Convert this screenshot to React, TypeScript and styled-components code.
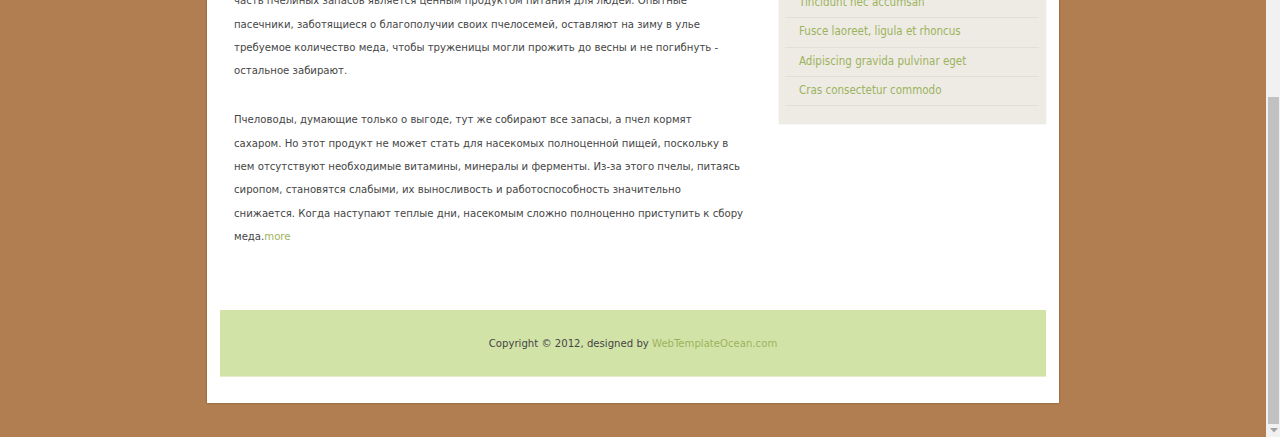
import React from "react";
import styled, { createGlobalStyle } from "styled-components";

const GlobalStyle = createGlobalStyle`
  html, body { margin: 0; padding: 0; }
  body {
    background: #b07e50;
    font-family: "DejaVu Sans Condensed", "DejaVu Sans", Tahoma, sans-serif;
    font-stretch: condensed;
    font-size: 11.25px;
    color: #454545;
  }
  a { text-decoration: none; }
`;

const Screen = styled.div`
  display: flex;
  width: 1280px;
  height: 437px;
  overflow: hidden;
`;

const Viewport = styled.div`
  flex: 1;
  display: flex;
  flex-direction: column;
  justify-content: flex-end;
  overflow: hidden;
  padding-bottom: 34px;
`;

const Wrapper = styled.div`
  width: 852px;
  margin: 0 auto;
  background: #ffffff;
  box-shadow: 0 0 2px rgba(60, 30, 0, 0.45);
  padding: 0 13px 26px;
  box-sizing: border-box;
`;

const ContentRow = styled.div`
  display: grid;
  grid-template-columns: 520px 267px;
  justify-content: space-between;
  align-items: start;
  padding-left: 14px;
`;

const Main = styled.div`
  padding: 30px 0 61.67px;
`;

const Title = styled.h2`
  margin: 0 0 15px;
  font-size: 22px;
  line-height: 30px;
  font-weight: normal;
  color: #6b8a2a;
`;

const Paragraph = styled.p<{ $last?: boolean }>`
  margin: 0 0 ${(p) => (p.$last ? 0 : 25.67)}px;
  line-height: 23.33px;
  color: #454545;
  white-space: nowrap;
`;

const GreenLink = styled.a`
  color: #9cb35c;
`;

const Sidebar = styled.aside`
  background: #eeebe5;
  box-shadow: 0 0 1px rgba(0, 0, 0, 0.18);
  padding: 10px 7px 17.67px 6px;
`;

const SideTitle = styled.h3`
  margin: 0 0 9.33px 14px;
  font-size: 15px;
  line-height: 20px;
  font-weight: normal;
  color: #6b8a2a;
`;

const LinkList = styled.ul`
  list-style: none;
  margin: 0;
  padding: 0;
`;

const LinkItem = styled.li`
  padding: 5px 0 7px 14px;
  font-size: 11.5px;
  line-height: 16.33px;
  height: 16.33px;
  border-bottom: 1px solid #e2dfd7;
`;

const SideLink = styled.a`
  color: #9cb35c;
`;

const Footer = styled.footer`
  height: 66px;
  display: flex;
  align-items: center;
  justify-content: center;
  background: #d2e3a8;
  border-bottom: 1px solid #e3edca;
  color: #454545;
`;

const ScrollTrack = styled.div`
  width: 14px;
  background: #f1f1f1;
  display: flex;
  flex-direction: column;
  padding-top: 97px;
  box-sizing: border-box;
`;

const ScrollThumb = styled.div`
  height: 327px;
  margin: 0 1px 0 2px;
  background: #c1c1c1;
`;

const ScrollArrow = styled.div`
  flex: 1;
  display: flex;
  align-items: center;
  justify-content: center;
  padding-left: 1px;
`;

const sideLinks = [
  "Lorem ipsum dolor sit amet",
  "Consectetur adipiscing elit",
  "Tincidunt nec accumsan",
  "Fusce laoreet, ligula et rhoncus",
  "Adipiscing gravida pulvinar eget",
  "Cras consectetur commodo",
];

const firstParagraph = [
  "Пчелы запасают мёд на зиму. Большая",
  "часть пчелиных запасов является ценным продуктом питания для людей. Опытные",
  "пасечники, заботящиеся о благополучии своих пчелосемей, оставляют на зиму в улье",
  "требуемое количество меда, чтобы труженицы могли прожить до весны и не погибнуть -",
  "остальное забирают.",
];

const secondParagraph = [
  "Пчеловоды, думающие только о выгоде, тут же собирают все запасы, а пчел кормят",
  "сахаром. Но этот продукт не может стать для насекомых полноценной пищей, поскольку в",
  "нем отсутствуют необходимые витамины, минералы и ферменты. Из-за этого пчелы, питаясь",
  "сиропом, становятся слабыми, их выносливость и работоспособность значительно",
  "снижается. Когда наступают теплые дни, насекомым сложно полноценно приступить к сбору",
];

const Lines = ({ lines }: { lines: string[] }) => (
  <>
    {lines.map((l, i) => (
      <React.Fragment key={i}>
        {l}
        {i < lines.length - 1 && <br />}
      </React.Fragment>
    ))}
  </>
);

export default function App() {
  return (
    <>
      <GlobalStyle />
      <Screen>
        <Viewport>
          <Wrapper>
            <ContentRow>
              <Main>
                <Title>Пчелиный мёд</Title>
                <Paragraph>
                  <Lines lines={firstParagraph} />
                </Paragraph>
                <Paragraph $last>
                  <Lines lines={secondParagraph} />
                  <br />
                  меда.<GreenLink href="#">more</GreenLink>
                </Paragraph>
              </Main>
              <Sidebar>
                <SideTitle>Категории</SideTitle>
                <LinkList>
                  {sideLinks.map((l) => (
                    <LinkItem key={l}>
                      <SideLink href="#">{l}</SideLink>
                    </LinkItem>
                  ))}
                </LinkList>
              </Sidebar>
            </ContentRow>
            <Footer>
              <span>
                Copyright © 2012, designed by{" "}
                <GreenLink href="#">WebTemplateOcean.com</GreenLink>
              </span>
            </Footer>
          </Wrapper>
        </Viewport>
        <ScrollTrack>
          <ScrollThumb />
          <ScrollArrow>
            <svg width="8" height="5" viewBox="0 0 8 5">
              <path d="M0 0 H8 L4 4.5 Z" fill="#a3a3a3" />
            </svg>
          </ScrollArrow>
        </ScrollTrack>
      </Screen>
    </>
  );
}
